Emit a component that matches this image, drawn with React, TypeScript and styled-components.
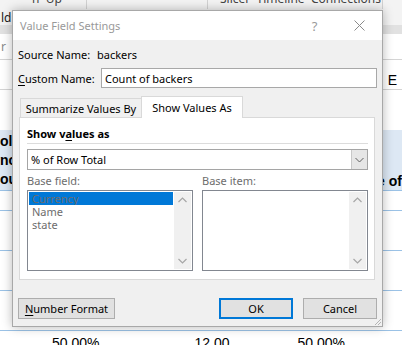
import styled, { createGlobalStyle } from "styled-components";

const GlobalStyle = createGlobalStyle`
  html, body {
    margin: 0;
    padding: 0;
  }
  body {
    width: 402px;
    height: 345px;
    overflow: hidden;
    background: #ffffff;
  }
`;

const Page = styled.div`
  position: relative;
  width: 402px;
  height: 345px;
  overflow: hidden;
`;

/* ---------- spreadsheet behind the dialog ---------- */

const Sheet = styled.div`
  display: flex;
  flex-direction: column;
  font-family: "Liberation Sans", Arial, sans-serif;
  font-size: 13px;
  color: #000;
`;

const SheetRow = styled.div<{ $h: number; $bg?: string; $line?: string }>`
  height: ${(p) => p.$h}px;
  box-sizing: border-box;
  background: ${(p) => p.$bg || "#ffffff"};
  border-bottom: 1px solid ${(p) => p.$line || "transparent"};
  display: flex;
  align-items: center;
  overflow: hidden;
`;

const RibbonItem = styled.div<{ $w: number; $sep?: boolean }>`
  width: ${(p) => p.$w}px;
  height: 10px;
  box-sizing: border-box;
  border-right: 1px solid ${(p) => (p.$sep ? "#d2d2d2" : "transparent")};
  font-family: "Noto Sans", "Open Sans", sans-serif;
  font-size: 12px;
  color: #444;
  line-height: 12px;
  display: flex;
  align-items: flex-start;
  overflow: hidden;
  span {
    display: block;
    margin-top: -7px;
    margin-left: 12px;
    white-space: nowrap;
  }
`;

const EdgeText = styled.span<{ $color?: string; $left?: number }>`
  margin-left: ${(p) => p.$left || 1}px;
  font-family: "Noto Sans", "Open Sans", sans-serif;
  font-size: 12px;
  color: ${(p) => p.$color || "#222"};
`;

const HeaderText = styled.div`
  margin-left: auto;
  margin-right: 5px;
  font-size: 14px;
  padding-top: 10px;
`;

const BandRow = styled(SheetRow)`
  align-items: stretch;
`;

const BandLeft = styled.div`
  display: flex;
  flex-direction: column;
  font-weight: bold;
  font-size: 14px;
  line-height: 19px;
  padding-top: 2px;
`;

const BandRight = styled.div`
  margin-left: auto;
  align-self: flex-end;
  font-weight: bold;
  font-size: 14px;
  padding-bottom: 1px;
  white-space: nowrap;
`;

const Value = styled.span<{ $left: number }>`
  margin-left: ${(p) => p.$left}px;
  font-size: 14px;
  line-height: 14px;
  align-self: flex-start;
  padding-top: 5px;
`;

/* ---------- dialog ---------- */

const Dialog = styled.div`
  position: absolute;
  left: 12px;
  top: 10px;
  width: 371px;
  height: 317px;
  box-sizing: border-box;
  border: 1px solid #a8a8a8;
  background: #f0f0f0;
  box-shadow: 0 0 10px rgba(0, 0, 0, 0.28);
  display: flex;
  flex-direction: column;
  font-family: "Noto Sans", "Open Sans", sans-serif;
  font-size: 11px;
  color: #000;
`;

const TitleBar = styled.div`
  height: 29px;
  background: #ffffff;
  display: flex;
  align-items: center;
  padding-left: 7px;
`;

const Title = styled.div`
  color: #999999;
  font-size: 11px;
  flex: 1;
`;

const TitleButton = styled.div`
  width: 45px;
  height: 29px;
  display: flex;
  align-items: center;
  justify-content: center;
  color: #9a9a9a;
  font-size: 13px;
`;

const Body = styled.div`
  flex: 1;
  display: flex;
  flex-direction: column;
  padding: 4px 5px 0 5px;
  position: relative;
`;

const FieldRow = styled.div<{ $mt?: number }>`
  height: 20px;
  margin-top: ${(p) => p.$mt || 0}px;
  display: flex;
  align-items: center;
`;

const Label = styled.span<{ $w: number }>`
  width: ${(p) => p.$w}px;
  flex-shrink: 0;
  white-space: nowrap;
  u {
    text-decoration: underline;
    text-underline-offset: 2px;
  }
`;

const TextBox = styled.div`
  flex: 1;
  height: 20px;
  box-sizing: border-box;
  border: 1px solid #a8a8a8;
  background: #ffffff;
  display: flex;
  align-items: center;
  padding-left: 3px;
`;

const TabStrip = styled.div`
  height: 22px;
  margin-top: 8px;
  margin-left: 2px;
  margin-bottom: -1px;
  display: flex;
  align-items: flex-end;
  position: relative;
  z-index: 1;
`;

const Tab = styled.div<{ $active?: boolean; $w: number }>`
  width: ${(p) => p.$w}px;
  height: ${(p) => (p.$active ? 22 : 19)}px;
  margin-bottom: ${(p) => (p.$active ? 0 : 1)}px;
  box-sizing: border-box;
  background: ${(p) => (p.$active ? "#ffffff" : "#f0f0f0")};
  border: 1px solid #d9d9d9;
  border-bottom: none;
  border-right: ${(p) => (p.$active ? "1px solid #d9d9d9" : "none")};
  display: flex;
  align-items: center;
  justify-content: center;
  white-space: nowrap;
`;

const Panel = styled.div`
  height: 163px;
  margin: 0 2px 0 1px;
  box-sizing: border-box;
  border: 1px solid #d9d9d9;
  background: #ffffff;
  padding: 0 6px 0 7px;
  display: flex;
  flex-direction: column;
`;

const SectionTitle = styled.div`
  margin-top: 8px;
  height: 16px;
  line-height: 16px;
  font-weight: bold;
  border-bottom: 1px solid #dcdcdc;
  padding-bottom: 1px;
  u {
    text-decoration: underline;
    text-underline-offset: 2px;
  }
`;

const Select = styled.div`
  margin-top: 5px;
  height: 21px;
  box-sizing: border-box;
  border: 1px solid #a5a5a5;
  display: flex;
  align-items: center;
  padding-left: 3px;
`;

const SelectText = styled.span`
  flex: 1;
`;

const DropButton = styled.div`
  width: 16px;
  height: 19px;
  box-sizing: border-box;
  background: #e6e6e6;
  border-left: 1px solid #c8c8c8;
  display: flex;
  align-items: center;
  justify-content: center;
`;

const Columns = styled.div`
  display: grid;
  grid-template-columns: 166px 166px;
  column-gap: 9px;
`;

const Column = styled.div`
  display: flex;
  flex-direction: column;
`;

const MutedLabel = styled.div`
  height: 16px;
  margin-top: 3px;
  margin-bottom: 1px;
  line-height: 16px;
  color: #6d6d6d;
`;

const ListBox = styled.div`
  height: 81px;
  box-sizing: border-box;
  border: 1px solid #828790;
  background: #ffffff;
  display: flex;
  padding: 1px;
`;

const Items = styled.div`
  flex: 1;
  display: flex;
  flex-direction: column;
`;

const Item = styled.div<{ $selected?: boolean }>`
  height: 13px;
  line-height: 13px;
  overflow: hidden;
  padding-left: 3px;
  color: #6d6d6d;
  background: ${(p) => (p.$selected ? "#0078d7" : "transparent")};
  margin-right: 1px;
`;

const ScrollBar = styled.div`
  width: 17px;
  background: #f0f0f0;
  display: flex;
  flex-direction: column;
  justify-content: space-between;
  align-items: center;
  padding: 5px 0;
`;

const ButtonRow = styled.div`
  margin-top: 18px;
  display: flex;
  gap: 10px;
`;

const Button = styled.div<{ $w: number; $default?: boolean }>`
  width: ${(p) => p.$w}px;
  height: 21px;
  box-sizing: border-box;
  background: #e1e1e1;
  border: ${(p) => (p.$default ? "2px solid #0078d7" : "1px solid #adadad")};
  display: flex;
  align-items: center;
  justify-content: center;
  u {
    text-decoration: underline;
    text-underline-offset: 2px;
  }
`;

const Spacer = styled.div`
  flex: 1;
`;

const Grip = styled.svg`
  position: absolute;
  right: 0;
  bottom: 0;
`;

const Chevron = ({ up }: { up?: boolean }) => (
  <svg width="9" height="6" viewBox="0 0 9 6">
    <path
      d={up ? "M0.5 5 L4.5 1 L8.5 5" : "M0.5 1 L4.5 5 L8.5 1"}
      fill="none"
      stroke="#a6a6a6"
      strokeWidth="1.2"
    />
  </svg>
);

const App = () => {
  return (
    <Page>
      <GlobalStyle />
      <Sheet>
        <SheetRow $h={10} $bg="#f3f3f3">
          <RibbonItem $w={20} />
          <RibbonItem $w={67} $sep>
            <span>n&nbsp;&nbsp;Up</span>
          </RibbonItem>
          <RibbonItem $w={121} $sep />
          <RibbonItem $w={175} $sep>
            <span>Slicer&nbsp;&nbsp;Timeline&nbsp;&nbsp;Connections</span>
          </RibbonItem>
        </SheetRow>
        <SheetRow $h={15} $bg="#f3f3f3">
          <EdgeText>ld</EdgeText>
        </SheetRow>
        <SheetRow $h={9} $bg="#e1e1e1" />
        <SheetRow $h={26} $line="#d4d4d4">
          <EdgeText $color="#8a8a8a" $left={0}>
            r
          </EdgeText>
        </SheetRow>
        <SheetRow $h={30} $line="#d4d4d4">
          <HeaderText>E</HeaderText>
        </SheetRow>
        <SheetRow $h={40} />
        <BandRow $h={61} $bg="#dde8f4" $line="#9bc2e6">
          <BandLeft>
            <span>olu</span>
            <span>nc</span>
            <span>ou</span>
          </BandLeft>
          <BandRight>e of</BandRight>
        </BandRow>
        <SheetRow $h={20} $line="#9bc2e6" />
        <SheetRow $h={40} $line="#9bc2e6" />
        <SheetRow $h={40} $line="#9bc2e6" />
        <SheetRow $h={40} $line="#9bc2e6" />
        <SheetRow $h={20}>
          <Value $left={52}>50.00%</Value>
          <Value $left={95}>12.00</Value>
          <Value $left={68}>50.00%</Value>
        </SheetRow>
      </Sheet>

      <Dialog>
        <TitleBar>
          <Title>Value Field Settings</Title>
          <TitleButton>?</TitleButton>
          <TitleButton>
            <svg width="11" height="11" viewBox="0 0 11 11">
              <path d="M0.5 0.5 L10.5 10.5 M10.5 0.5 L0.5 10.5" stroke="#8a8a8a" strokeWidth="1" />
            </svg>
          </TitleButton>
        </TitleBar>
        <Body>
          <FieldRow>
            <Label $w={79}>Source Name:</Label>
            <span>backers</span>
          </FieldRow>
          <FieldRow $mt={4}>
            <Label $w={83}>
              <u>C</u>ustom Name:
            </Label>
            <TextBox>Count of backers</TextBox>
          </FieldRow>
          <TabStrip>
            <Tab $w={121}>Summarize Values By</Tab>
            <Tab $w={102} $active>
              Show Values As
            </Tab>
          </TabStrip>
          <Panel>
            <SectionTitle>
              Show v<u>a</u>lues as
            </SectionTitle>
            <Select>
              <SelectText>% of Row Total</SelectText>
              <DropButton>
                <svg width="9" height="6" viewBox="0 0 9 6">
                  <path d="M0.5 1 L4.5 5 L8.5 1" fill="none" stroke="#606060" strokeWidth="1" />
                </svg>
              </DropButton>
            </Select>
            <Columns>
              <Column>
                <MutedLabel>Base field:</MutedLabel>
                <ListBox>
                  <Items>
                    <Item $selected>Currency</Item>
                    <Item>Name</Item>
                    <Item>state</Item>
                  </Items>
                  <ScrollBar>
                    <Chevron up />
                    <Chevron />
                  </ScrollBar>
                </ListBox>
              </Column>
              <Column>
                <MutedLabel>Base item:</MutedLabel>
                <ListBox>
                  <Items />
                  <ScrollBar>
                    <Chevron up />
                    <Chevron />
                  </ScrollBar>
                </ListBox>
              </Column>
            </Columns>
          </Panel>
          <ButtonRow>
            <Button $w={97}>
              <span>
                <u>N</u>umber Format
              </span>
            </Button>
            <Spacer />
            <Button $w={74} $default>
              OK
            </Button>
            <Button $w={74}>Cancel</Button>
          </ButtonRow>
          <Grip width="8" height="8" viewBox="0 0 8 8">
            <path d="M7 1 L1 7 M7 4 L4 7" stroke="#b4b4b4" strokeWidth="1" />
          </Grip>
        </Body>
      </Dialog>
    </Page>
  );
};

export default App;
